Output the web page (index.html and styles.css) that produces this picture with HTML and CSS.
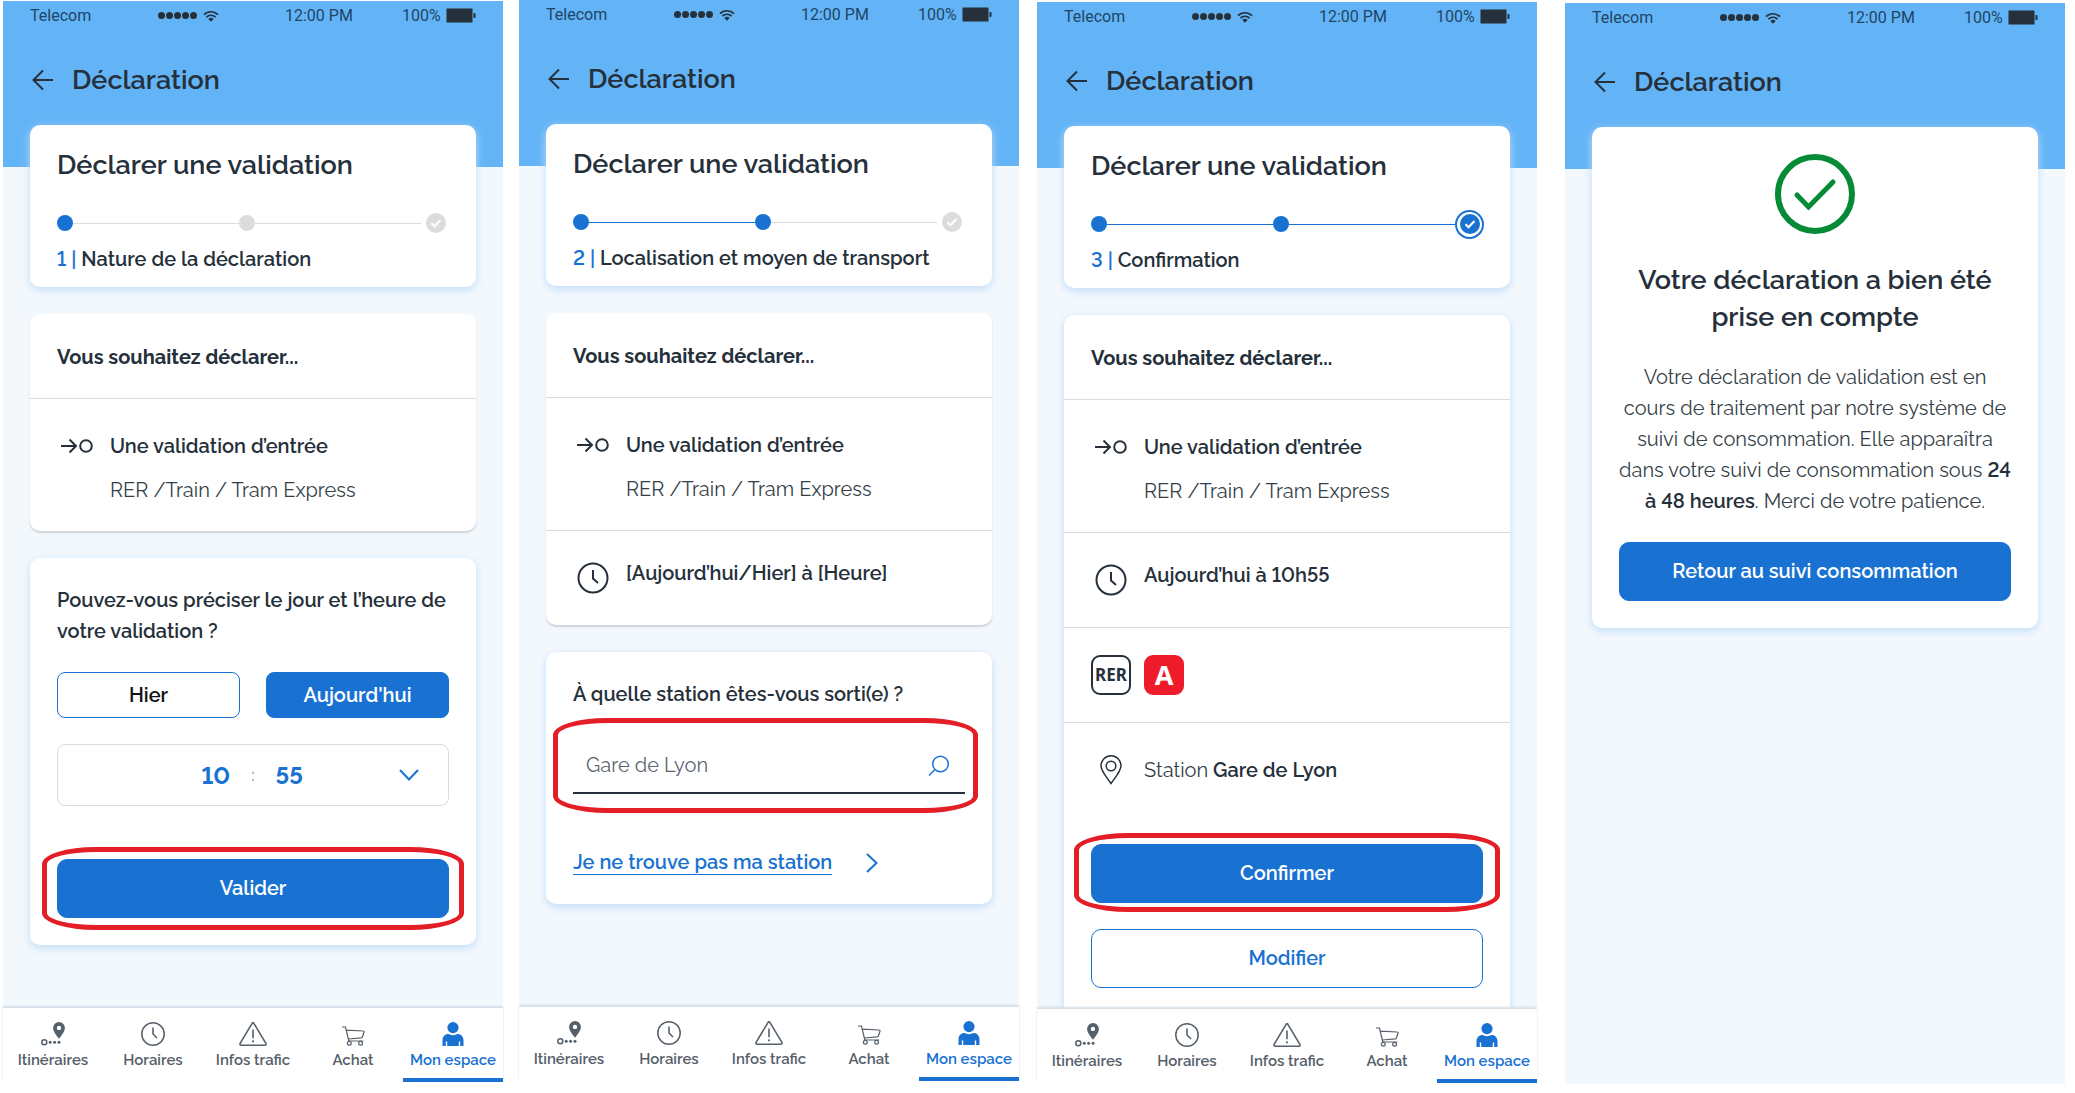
FILE: index.html
```html
<!DOCTYPE html>
<html lang="fr">
<head>
<meta charset="utf-8">
<meta name="viewport" content="width=device-width, initial-scale=1">
<title>Déclarer une validation</title>
<link rel="stylesheet" href="styles.css">
</head>
<body>
<svg class="sprite" aria-hidden="true">
  <symbol id="wifi" viewBox="0 0 16 12"><path d="M1 4.6a10 10 0 0 1 14 0M3.4 7.1a6.6 6.6 0 0 1 9.2 0" fill="none" stroke="currentColor" stroke-width="1.7"/><path d="M5.4 9a3.8 3.8 0 0 1 5.2 0L8 11.8z" fill="currentColor"/></symbol>
  <symbol id="battery" viewBox="0 0 30 15"><rect x=".5" y=".5" width="26" height="14" rx="1" fill="#25303a" stroke="#45708f"/><path d="M27.500 5h1a1 1 0 0 1 1 1v3a1 1 0 0 1-1 1h-1z" fill="#25303a"/></symbol>
  <symbol id="back" viewBox="0 0 22 22"><path d="M21 11H2M11 1.500 1.500 11l9.500 9.500" fill="none" stroke="currentColor" stroke-width="2"/></symbol>
  <symbol id="tick" viewBox="0 0 20 20"><circle cx="10" cy="10" r="10" fill="currentColor"/><path d="m5.500 10.300 3 3 6-6.300" fill="none" stroke="#fff" stroke-width="2"/></symbol>
  <symbol id="entry" viewBox="0 0 32 16"><path d="M0 8h15M8.500 1.500 15 8l-6.500 6.500" fill="none" stroke="currentColor" stroke-width="2"/><circle cx="25" cy="8" r="5.800" fill="none" stroke="currentColor" stroke-width="2"/></symbol>
  <symbol id="clock" viewBox="0 0 32 32"><circle cx="16" cy="16" r="14.500" fill="none" stroke="currentColor" stroke-width="2"/><path d="M16 8v8.500l5 4.500" fill="none" stroke="currentColor" stroke-width="2"/></symbol>
  <symbol id="place" viewBox="0 0 22 30"><path d="M11 28.500C6 21.500 1 16 1 10.800a10 10 0 0 1 20 0C21 16 16 21.500 11 28.500z" fill="none" stroke="currentColor" stroke-width="1.500"/><circle cx="11" cy="11" r="4.800" fill="none" stroke="currentColor" stroke-width="1.500"/></symbol>
  <symbol id="search" viewBox="0 0 22 22"><circle cx="12.500" cy="9" r="7.800" fill="none" stroke="currentColor" stroke-width="1.500"/><path d="M7 14.500 1 20.500" fill="none" stroke="currentColor" stroke-width="1.500"/></symbol>
  <symbol id="down" viewBox="0 0 20 12"><path d="m1 1 9 9.500L19 1" fill="none" stroke="currentColor" stroke-width="2"/></symbol>
  <symbol id="next" viewBox="0 0 12 20"><path d="m1 1 9.500 9L1 19" fill="none" stroke="currentColor" stroke-width="2"/></symbol>
  <symbol id="route" viewBox="0 0 24 24"><path d="M18 0a5.900 5.900 0 0 1 5.900 5.900c0 3.600-3.400 7.400-5.900 10.800-2.500-3.400-5.900-7.200-5.900-10.800A5.900 5.900 0 0 1 18 0zm0 3.700a2.200 2.200 0 1 0 0 4.400 2.200 2.200 0 0 0 0-4.400z" fill="currentColor"/><circle cx="3.300" cy="20.300" r="2.500" fill="none" stroke="currentColor" stroke-width="1.500"/><g fill="currentColor"><circle cx="9.200" cy="20.300" r="1.500"/><circle cx="13.600" cy="20.300" r="1.500"/><circle cx="18" cy="20.300" r="1.500"/></g></symbol>
  <symbol id="hours" viewBox="0 0 24 24"><circle cx="12" cy="12" r="11.200" fill="none" stroke="currentColor" stroke-width="1.500"/><path d="M12 5.500V12l4 4" fill="none" stroke="currentColor" stroke-width="1.600"/></symbol>
  <symbol id="alert" viewBox="0 0 28 24"><path d="M13.100 1.300 1.100 21.400a1.200 1.200 0 0 0 1 1.800h23.800a1.200 1.200 0 0 0 1-1.800l-12-20.100a1 1 0 0 0-1.800 0z" fill="none" stroke="currentColor" stroke-width="1.600"/><path d="M14 7.500v8.800" stroke="currentColor" stroke-width="1.600"/><circle cx="14" cy="19.300" r="1.100" fill="currentColor"/></symbol>
  <symbol id="cart" viewBox="0 0 24 24"><path d="M1 5h3.500l3.300 14M5.300 8.200l17 .8c.6 0 .8.500.7 1l-1.500 4.800c-.2.600-.6.900-1.200 1L7.200 17M7.800 19h14.500" fill="none" stroke="currentColor" stroke-width="1.200"/><circle cx="8.300" cy="21.300" r="1.900" fill="none" stroke="currentColor" stroke-width="1.200"/><circle cx="19.600" cy="21.300" r="1.900" fill="none" stroke="currentColor" stroke-width="1.200"/></symbol>
  <symbol id="user" viewBox="0 0 22 24"><circle cx="11" cy="5.600" r="5.600" fill="currentColor"/><path d="M.5 24v-5.500C.5 14.500 3 12 6.500 12 9 13.500 13 13.500 15.500 12c3.500 0 6 2.500 6 6.500V24h-3.300v-4.500h-1.400V24H5.200v-4.500H3.800V24z" fill="currentColor"/></symbol>
</svg>

<div class="board">

<article class="phone phone--nature">
  <header class="top">
    <div class="status"><span>Telecom</span><span class="signal"><i></i><i></i><i></i><i></i><i></i><svg class="wifi"><use href="#wifi"/></svg></span><span>12:00 PM</span><span class="power">100%<svg class="battery"><use href="#battery"/></svg></span></div>
    <div class="bar"><button class="back" type="button" aria-label="Retour"><svg><use href="#back"/></svg></button><h1>Déclaration</h1></div>
  </header>
  <main class="content">
    <section class="card card--steps">
      <h2>Déclarer une validation</h2>
      <div class="steps"><i class="dot on"></i><i class="line"></i><i class="dot"></i><i class="line"></i><span class="end"><svg><use href="#tick"/></svg></span></div>
      <p class="step"><span>1 |</span> Nature de la déclaration</p>
    </section>
    <section class="card card--flat">
      <h3>Vous souhaitez déclarer...</h3>
      <div class="entry entry--double"><span class="icon"><svg class="i-entry"><use href="#entry"/></svg></span><div><p>Une validation d’entrée</p><p class="light">RER /Train / Tram Express</p></div></div>
    </section>
    <form class="card card--form">
      <p>Pouvez-vous préciser le jour et l’heure de votre validation ?</p>
      <div class="days"><button class="btn btn--small btn--day" type="button">Hier</button><button class="btn btn--small btn--main" type="button">Aujourd'hui</button></div>
      <div class="time"><select class="hour" aria-label="Heure"><option>10</option></select><span>:</span><select aria-label="Minutes"><option>55</option></select><svg><use href="#down"/></svg></div>
      <div class="marked marked--submit"><button class="btn btn--main" type="button">Valider</button></div>
    </form>
  </main>
  <nav class="tabs">
    <a href="#"><svg><use href="#route"/></svg>Itinéraires</a><a href="#"><svg><use href="#hours"/></svg>Horaires</a><a href="#"><svg class="wide"><use href="#alert"/></svg>Infos trafic</a><a href="#"><svg><use href="#cart"/></svg>Achat</a><a href="#" class="current"><svg><use href="#user"/></svg>Mon espace</a>
  </nav>
</article>

<article class="phone phone--place">
  <header class="top">
    <div class="status"><span>Telecom</span><span class="signal"><i></i><i></i><i></i><i></i><i></i><svg class="wifi"><use href="#wifi"/></svg></span><span>12:00 PM</span><span class="power">100%<svg class="battery"><use href="#battery"/></svg></span></div>
    <div class="bar"><button class="back" type="button" aria-label="Retour"><svg><use href="#back"/></svg></button><h1>Déclaration</h1></div>
  </header>
  <main class="content">
    <section class="card card--steps">
      <h2>Déclarer une validation</h2>
      <div class="steps"><i class="dot on"></i><i class="line on"></i><i class="dot on"></i><i class="line"></i><span class="end"><svg><use href="#tick"/></svg></span></div>
      <p class="step"><span>2 |</span> Localisation et moyen de transport</p>
    </section>
    <section class="card card--flat">
      <h3>Vous souhaitez déclarer...</h3>
      <div class="entry entry--double"><span class="icon"><svg class="i-entry"><use href="#entry"/></svg></span><div><p>Une validation d’entrée</p><p class="light">RER /Train / Tram Express</p></div></div>
      <div class="entry"><span class="icon"><svg class="i-clock"><use href="#clock"/></svg></span><p>[Aujourd’hui/Hier] à [Heure]</p></div>
    </section>
    <form class="card card--form card--search">
      <label for="station">À quelle station êtes-vous sorti(e) ?</label>
      <div class="marked marked--field"><div class="field"><input id="station" type="text" value="Gare de Lyon"><svg><use href="#search"/></svg></div></div>
      <a class="missing" href="#"><span>Je ne trouve pas ma station</span><svg><use href="#next"/></svg></a>
    </form>
  </main>
  <nav class="tabs">
    <a href="#"><svg><use href="#route"/></svg>Itinéraires</a><a href="#"><svg><use href="#hours"/></svg>Horaires</a><a href="#"><svg class="wide"><use href="#alert"/></svg>Infos trafic</a><a href="#"><svg><use href="#cart"/></svg>Achat</a><a href="#" class="current"><svg><use href="#user"/></svg>Mon espace</a>
  </nav>
</article>

<article class="phone phone--confirm">
  <header class="top">
    <div class="status"><span>Telecom</span><span class="signal"><i></i><i></i><i></i><i></i><i></i><svg class="wifi"><use href="#wifi"/></svg></span><span>12:00 PM</span><span class="power">100%<svg class="battery"><use href="#battery"/></svg></span></div>
    <div class="bar"><button class="back" type="button" aria-label="Retour"><svg><use href="#back"/></svg></button><h1>Déclaration</h1></div>
  </header>
  <main class="content">
    <section class="card card--steps">
      <h2>Déclarer une validation</h2>
      <div class="steps"><i class="dot on"></i><i class="line on"></i><i class="dot on"></i><i class="line on"></i><span class="end on"><svg><use href="#tick"/></svg></span></div>
      <p class="step"><span>3 |</span> Confirmation</p>
    </section>
    <section class="card card--open">
      <h3>Vous souhaitez déclarer...</h3>
      <div class="entry entry--double"><span class="icon"><svg class="i-entry"><use href="#entry"/></svg></span><div><p>Une validation d’entrée</p><p class="light">RER /Train / Tram Express</p></div></div>
      <div class="entry"><span class="icon"><svg class="i-clock"><use href="#clock"/></svg></span><p>Aujourd’hui à 10h55</p></div>
      <div class="entry"><span class="badge">RER</span><span class="badge badge--a">A</span></div>
      <div class="entry entry--mid"><span class="icon"><svg class="i-place"><use href="#place"/></svg></span><p><span class="light">Station</span> <b>Gare de Lyon</b></p></div>
      <div class="actions"><div class="marked marked--confirm"><button class="btn btn--main" type="button">Confirmer</button></div><button class="btn" type="button">Modifier</button></div>
    </section>
  </main>
  <nav class="tabs">
    <a href="#"><svg><use href="#route"/></svg>Itinéraires</a><a href="#"><svg><use href="#hours"/></svg>Horaires</a><a href="#"><svg class="wide"><use href="#alert"/></svg>Infos trafic</a><a href="#"><svg><use href="#cart"/></svg>Achat</a><a href="#" class="current"><svg><use href="#user"/></svg>Mon espace</a>
  </nav>
</article>

<article class="phone phone--done">
  <header class="top">
    <div class="status"><span>Telecom</span><span class="signal"><i></i><i></i><i></i><i></i><i></i><svg class="wifi"><use href="#wifi"/></svg></span><span>12:00 PM</span><span class="power">100%<svg class="battery"><use href="#battery"/></svg></span></div>
    <div class="bar"><button class="back" type="button" aria-label="Retour"><svg><use href="#back"/></svg></button><h1>Déclaration</h1></div>
  </header>
  <main class="content">
    <section class="card card--done">
      <svg class="success" viewBox="0 0 80 80"><circle cx="40" cy="40" r="37" fill="none" stroke="currentColor" stroke-width="6"/><path d="m22 41 11.500 12L58 28" fill="none" stroke="currentColor" stroke-width="5" stroke-linecap="round"/></svg>
      <h2>Votre déclaration a bien été prise en compte</h2>
      <p class="light">Votre déclaration de validation est en cours de traitement par notre système de suivi de consommation. Elle apparaîtra dans votre suivi de consommation sous <b>24</b> <b>à&nbsp;48 heures</b>. Merci de votre patience.</p>
      <button class="btn btn--main" type="button">Retour au suivi consommation</button>
    </section>
  </main>
</article>

</div>
</body>
</html>
```
FILE: styles.css
```css
:root {
  --blue: #1972d2;
  --sky: #63b4f6;
  --pale: #f3f8fd;
  --ink: #25303b;
  --grey: #dcdcdc;
  --red: #e41e26;
}

* { box-sizing: border-box; }

body {
  margin: 0;
  background: #fff;
  color: var(--ink);
  font: 600 20px/31px Raleway, Lato, sans-serif;
  font-variant-numeric: lining-nums;
}

h1, h2, h3, p { margin: 0; }
button, input, select { font: inherit; font-variant-numeric: inherit; color: inherit; }
svg { display: block; }
.sprite { position: absolute; width: 0; height: 0; }

/* Four screens side by side */
.board {
  display: flex;
  align-items: flex-start;
  padding: 0 10px 0 3px;
}

.phone {
  display: flex;
  flex: 1;
  flex-direction: column;
  min-width: 0;
  min-height: calc(100vh - 12px);
  background: var(--pale);
}

.phone--nature { margin-top: 1px; }
.phone--place { margin-left: 16px; }
.phone--confirm { margin: 2px 0 0 18px; }
.phone--done { margin: 3px 0 0 28px; }

/* Header */
.top {
  height: 166px;
  padding: 0 27px;
  background: var(--sky);
}

.status {
  display: grid;
  grid-template-columns: 128fr 127fr 117fr 74fr;
  align-items: center;
  height: 29px;
  font: 400 16px/28px Roboto, sans-serif;
  color: #1f4565;
}

.signal { display: flex; align-items: center; gap: 1px; color: var(--ink); }
.signal i { width: 7px; height: 7px; border-radius: 50%; background: currentColor; }
.wifi { width: 16px; height: 12px; margin-left: 5px; }
.power { display: flex; align-items: center; justify-content: space-between; }
.battery { width: 30px; height: 15px; }

.bar { display: flex; align-items: center; gap: 18px; margin-top: 31px; }
.back { padding: 0 0 0 2px; border: 0; background: none; }
.back svg { width: 22px; height: 22px; }
h1, h2 { font-size: 27px; font-weight: 600; line-height: 37px; }

/* Cards */
.content {
  display: flex;
  flex: 1;
  flex-direction: column;
  gap: 27px;
  margin-top: -42px;
  padding: 0 27px;
}

.card {
  border-radius: 10px;
  background: #fff;
  box-shadow: 0 3px 8px #c0dcf7;
}

.card--steps { height: 162px; padding: 21px 26px 0 27px; }
.card--flat { box-shadow: 0 2px 2px #ccd3da; }
.card--form { padding: 27px; }
.card--search { padding-bottom: 29px; }
.card--open { flex: 1; border-radius: 10px 10px 0 0; }

.steps { display: flex; align-items: center; height: 30px; margin-top: 25px; }
.dot { width: 16px; height: 16px; border-radius: 50%; background: var(--grey); }
.line { flex: 1; height: 1px; background: var(--grey); }
.dot.on, .line.on { background: var(--blue); }
.end { display: grid; place-items: center; width: 29px; height: 29px; border-radius: 50%; color: var(--grey); }
.end svg { width: 20px; height: 20px; }
.end.on { border: 2px solid; color: var(--blue); }
.step { margin-top: 6px; }
.step span { color: var(--blue); }

h3 { padding: 28px 27px 25px; font-size: 20px; font-weight: 700; line-height: 31px; }

.entry {
  display: flex;
  gap: 13px;
  padding: 27px;
  border-top: 1px solid var(--grey);
}

.entry--double { padding-bottom: 25px; }
.entry--double div { display: grid; gap: 13px; padding-top: 5px; }
.entry--mid { align-items: center; }
.icon { display: grid; place-items: center; width: 40px; height: 40px; }
.i-entry { width: 32px; height: 16px; }
.i-clock { width: 32px; height: 32px; }
.i-place { width: 22px; height: 30px; }
.light { font-weight: 400; color: #353f48; }
b { font-weight: 600; color: var(--ink); }

.badge {
  display: grid;
  place-items: center;
  width: 40px;
  height: 40px;
  border: 2px solid var(--ink);
  border-radius: 9px;
  font: 700 17px/36px "Noto Sans", sans-serif;
}
.badge--a { border-color: #ee1c2b; background: #ee1c2b; color: #fff; font-size: 27px; }

/* Controls */
.btn {
  display: block;
  width: 100%;
  height: 59px;
  padding: 0;
  border: 1px solid var(--blue);
  border-radius: 10px;
  background: #fff;
  color: var(--blue);
  text-align: center;
}
.btn--main { background: var(--blue); color: #fff; }
.btn--small { height: 46px; border-radius: 8px; }
.btn--day { color: #111; }

.days { display: grid; grid-template-columns: 1fr 1fr; gap: 26px; margin-top: 25px; }

.time {
  display: grid;
  grid-template-columns: 1fr auto auto auto 1fr;
  align-items: center;
  gap: 21px;
  height: 62px;
  margin-top: 26px;
  padding: 0 29px;
  border: 1px solid var(--grey);
  border-radius: 8px;
}
.time span { font-size: 16px; font-weight: 400; color: #5c666f; }
.time select {
  width: 29px;
  padding: 0;
  border: 0;
  appearance: none;
  background: none;
  color: var(--blue);
  font-size: 24px;
  font-weight: 700;
}
.time .hour { grid-column: 2; }
.time svg { justify-self: end; width: 20px; height: 12px; color: var(--blue); }

.field { display: flex; align-items: center; height: 58px; padding: 3px 15px 0 13px; border-bottom: 2px solid var(--ink); }
.field input { flex: 1; min-width: 0; padding: 0; border: 0; background: none; font-weight: 400; color: #5c666f; }
.field svg { width: 22px; height: 22px; color: var(--blue); }

.missing { display: flex; align-items: center; gap: 34px; margin-top: 56px; color: var(--blue); text-decoration: none; }
.missing span { border-bottom: 1px solid; line-height: 24px; }
.missing svg { width: 12px; height: 20px; }

.actions { display: grid; gap: 26px; padding: 27px 27px 19px; }

/* Red pen mark laid over a control */
.marked { position: relative; }
.marked::after {
  content: "";
  position: absolute;
  inset: -12px -15px;
  border: 5px solid var(--red);
  border-radius: 54px / 17px;
  pointer-events: none;
}
.marked--submit { margin-top: 53px; }
.marked--field { margin-top: 26px; }
.marked--field::after { inset: -18px -13px -19px -20px; }
.marked--confirm::after { inset: -11px -17px -9px; }

/* Bottom tabs */
.tabs {
  display: grid;
  grid-template-columns: repeat(5, 1fr);
  height: 74px;
  background: #fff;
  box-shadow: 0 -2px 2px #d3dde6;
  z-index: 1;
}
.tabs a {
  display: flex;
  flex-direction: column;
  align-items: center;
  gap: 4px;
  padding-top: 14px;
  border-bottom: 4px solid transparent;
  color: #56606a;
  font-size: 15px;
  font-weight: 600;
  line-height: 20px;
  text-decoration: none;
}
.tabs svg { width: 24px; height: 24px; }
.tabs .wide { width: 28px; }
.tabs .current { border-color: var(--blue); color: var(--blue); }

/* Success screen */
.card--done { padding: 27px; text-align: center; }
.success { width: 80px; height: 80px; margin: 0 auto 27px; color: #058a36; }
.card--done p { margin: 27px 0 25px; }
```
